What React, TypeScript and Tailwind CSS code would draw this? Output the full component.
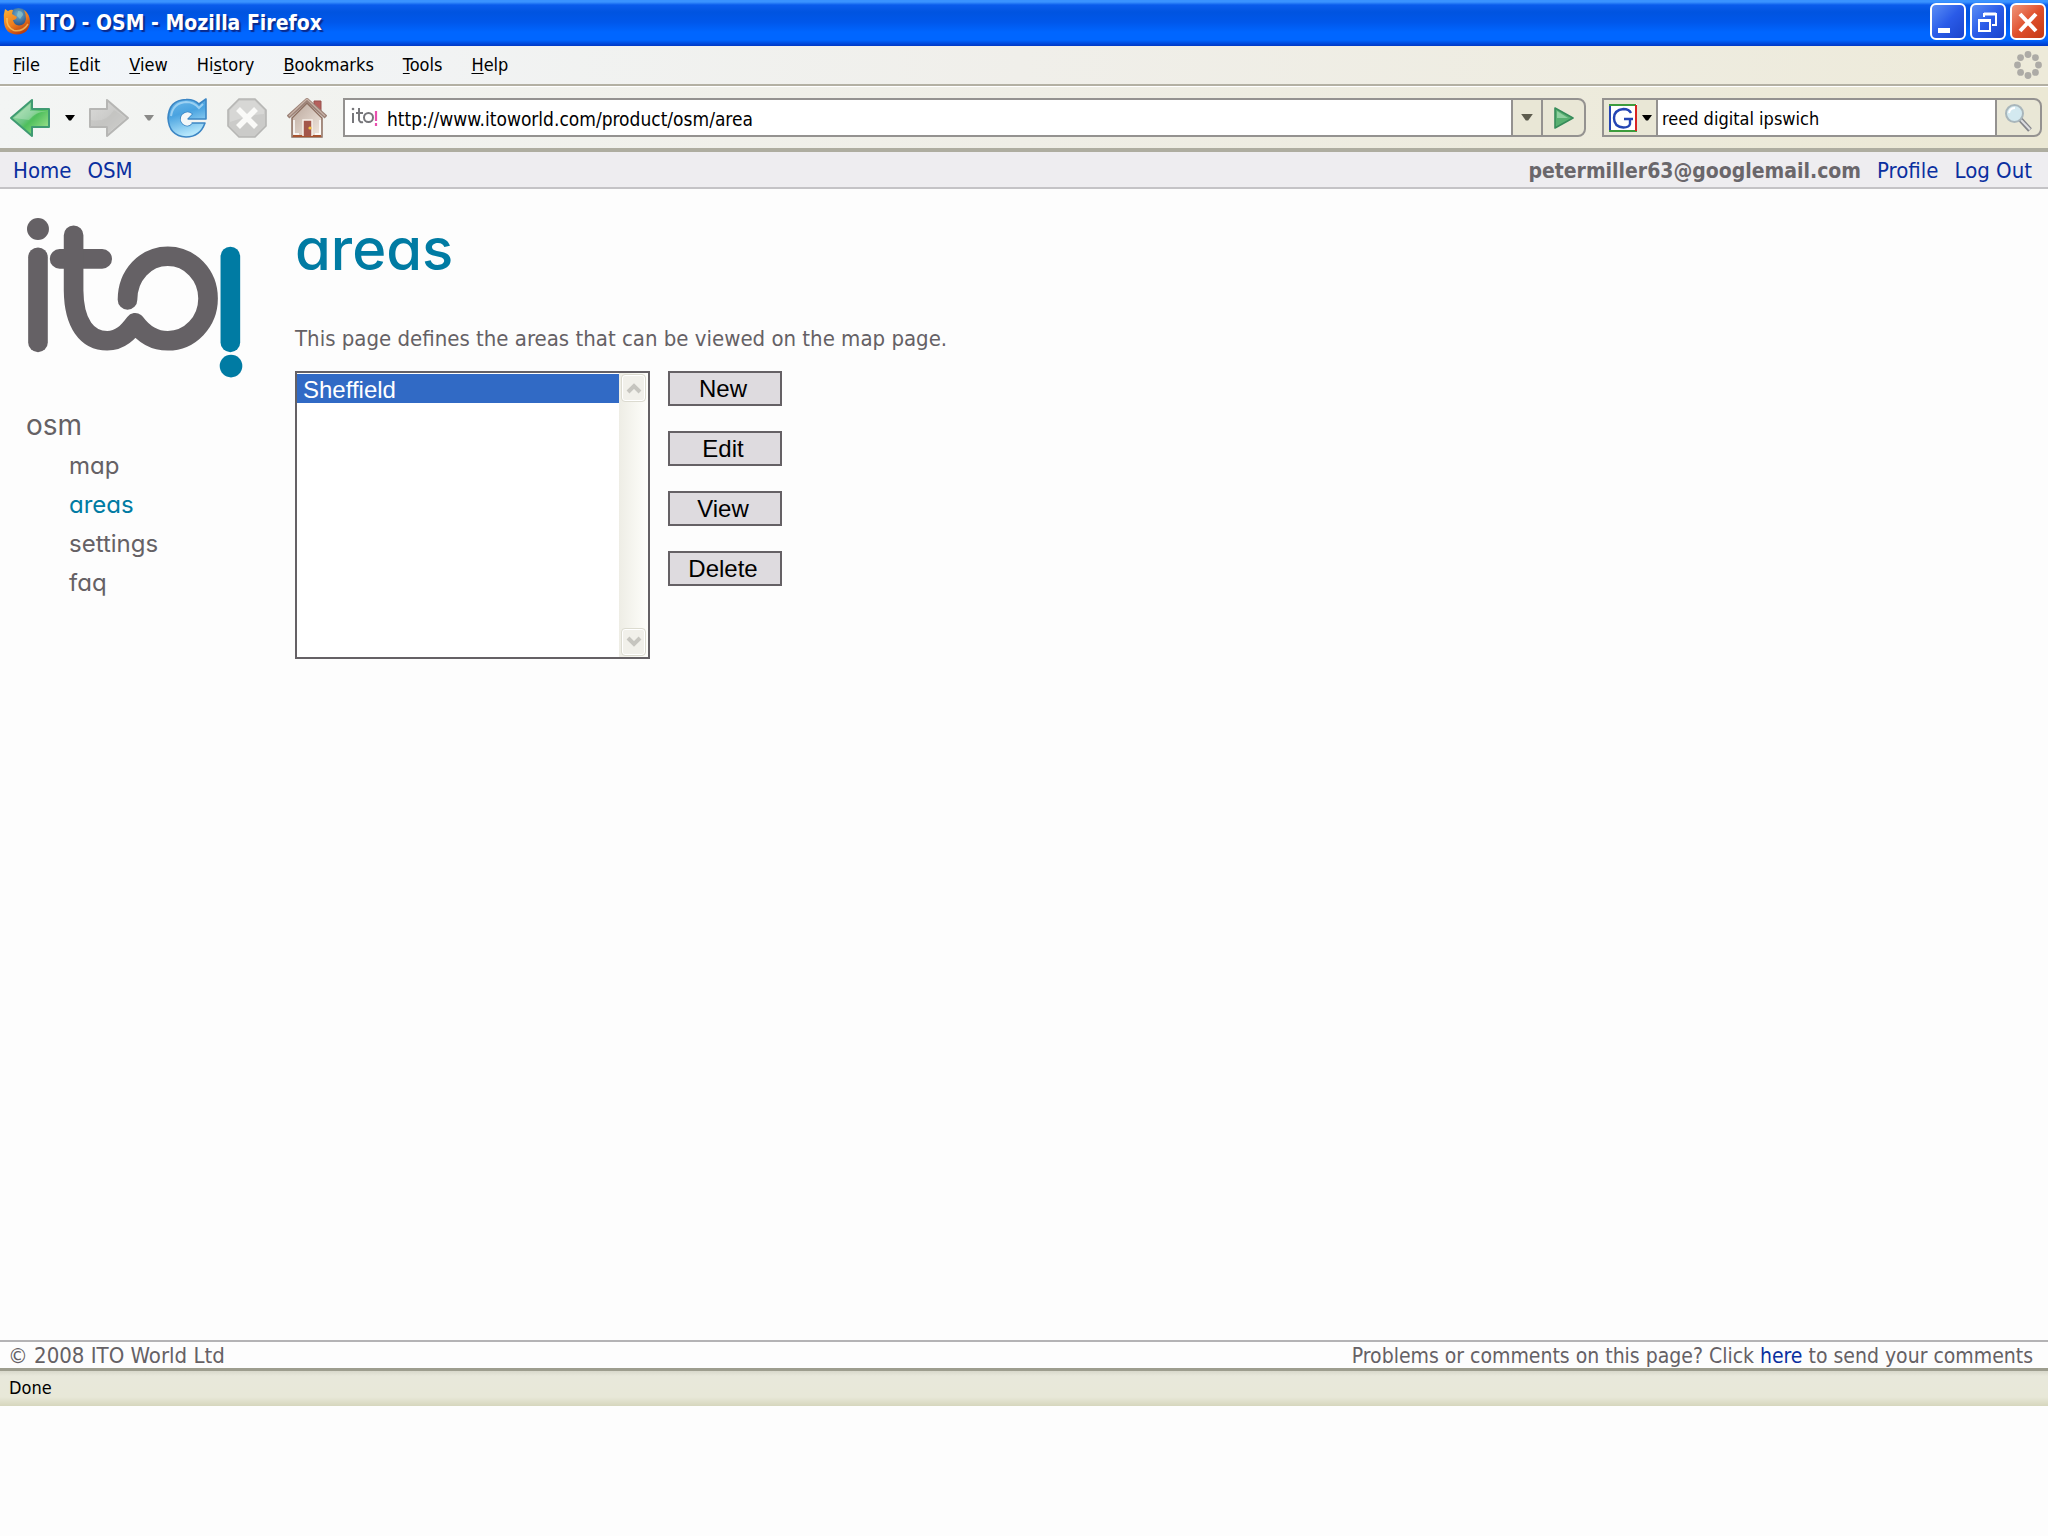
import React from 'react';

const uiFont = "font-['DejaVu_Sans_Condensed','Noto_Sans',sans-serif]";
const brandFont = "font-[Inter,sans-serif] [font-feature-settings:'cv11','ss03']";

const menus = [
  ['', 'F', 'ile'],
  ['', 'E', 'dit'],
  ['', 'V', 'iew'],
  ['Hi', 's', 'tory'],
  ['', 'B', 'ookmarks'],
  ['', 'T', 'ools'],
  ['', 'H', 'elp'],
];

function FirefoxIcon() {
  return (
    <svg className="size-7 shrink-0" viewBox="0 0 28 28" aria-hidden="true">
      <defs>
        <linearGradient id="fox" x1="0" y1="0" x2="0.6" y2="1">
          <stop offset="0" stopColor="#f7b23a" />
          <stop offset="0.6" stopColor="#ef7d1d" />
          <stop offset="1" stopColor="#b83d10" />
        </linearGradient>
        <radialGradient id="globe" cx="0.5" cy="0.3" r="0.7">
          <stop offset="0" stopColor="#6fb0d0" />
          <stop offset="1" stopColor="#16366f" />
        </radialGradient>
      </defs>
      <circle cx="15.500" cy="11.500" r="10.500" fill="url(#globe)" />
      <path d="M15 4 Q20 4 20 8 L17 12 L14 9Z" fill="#8fc4c8" opacity="0.7" />
      <path d="M2 2 L5 4 Q8 2 10 3 L9 7 L14 10 Q13 13 10 13 Q11 18 16 18.500 Q22 18 23 12 Q23 7 21 3 Q27 7 27 15 Q26 27 14 27.500 Q2 27 1 15 Q0 8 2 2Z" fill="url(#fox)" />
      <path d="M4 11 Q3 20 11 23.500 Q20 25 25 17" stroke="#fbd36a" strokeWidth="1.500" fill="none" opacity="0.7" />
    </svg>
  );
}

function BackIcon() {
  return (
    <svg className="h-10 w-[42px]" viewBox="0 0 42 40" aria-hidden="true">
      <defs>
        <linearGradient id="back" x1="0" y1="0" x2="1" y2="1">
          <stop offset="0" stopColor="#b5e6b8" />
          <stop offset="0.45" stopColor="#6cc583" />
          <stop offset="0.55" stopColor="#4fbf5c" />
          <stop offset="1" stopColor="#b6ec9c" />
        </linearGradient>
      </defs>
      <path d="M2 20 L23 2 V11 H40 V29 H23 V38 Z" fill="url(#back)" stroke="#3f9b72" strokeWidth="2" strokeLinejoin="round" />
      <path d="M5 20 L21 6 V13 H38 Q26 14 20 22Z" fill="#fff" opacity="0.25" />
    </svg>
  );
}

function ForwardIcon() {
  return (
    <svg className="h-10 w-[42px]" viewBox="0 0 42 40" aria-hidden="true">
      <defs>
        <linearGradient id="fwd" x1="0" y1="0" x2="1" y2="1">
          <stop offset="0" stopColor="#dcdcda" />
          <stop offset="0.5" stopColor="#cacac8" />
          <stop offset="1" stopColor="#dededc" />
        </linearGradient>
      </defs>
      <path d="M40 20 L19 2 V11 H2 V29 H19 V38 Z" fill="url(#fwd)" stroke="#b6b6b4" strokeWidth="2" strokeLinejoin="round" />
      <path d="M3 28 V22 Q18 25 26 12 L38 20 L20 35 V28Z" fill="#bcbcba" opacity="0.4" />
    </svg>
  );
}

function ReloadIcon() {
  return (
    <svg className="size-10" viewBox="0 0 40 40" aria-hidden="true">
      <defs>
        <linearGradient id="rel" x1="0" y1="0" x2="0.3" y2="1">
          <stop offset="0" stopColor="#6db9ea" />
          <stop offset="0.45" stopColor="#4aa3e0" />
          <stop offset="1" stopColor="#b4e6fb" />
        </linearGradient>
      </defs>
      <path d="M39 1 V21 H20 L25 16 Q20 12 15 17 Q12 22 16 26 Q21 30 25 25 H38 Q33 39 19 39 Q2 38 1 20 Q2 2 19 1.500 Q27 1 32 6 Z" fill="url(#rel)" stroke="#3c86c4" strokeWidth="1.600" strokeLinejoin="round" />
      <path d="M4 18 Q6 5 19 4 Q27 4 32 10 L36 6" stroke="#b8e0f8" strokeWidth="2" fill="none" opacity="0.7" />
      <path d="M25 16 Q20 12 15 17 Q12 22 16 26 Q21 30 25 25 L20 21 Z" fill="#f4f7f8" />
    </svg>
  );
}

function StopIcon() {
  return (
    <svg className="size-10" viewBox="0 0 40 40" aria-hidden="true">
      <path d="M12 1 H28 L39 12 V28 L28 39 H12 L1 28 V12Z" fill="#cbcbc9" stroke="#b6b6b4" strokeWidth="1.600" />
      <path d="M12 3 H28 L37 12 V16 Q20 17 3 24 V12Z" fill="#dadad8" opacity="0.8" />
      <path d="M11 11 L29 29 M29 11 L11 29" stroke="#fafaf8" strokeWidth="5.500" />
    </svg>
  );
}

function HomeIcon() {
  return (
    <svg className="size-10" viewBox="0 0 40 40" aria-hidden="true">
      <defs>
        <linearGradient id="wall" x1="0" y1="0" x2="1" y2="1">
          <stop offset="0" stopColor="#b9a69b" />
          <stop offset="1" stopColor="#f4ebe2" />
        </linearGradient>
      </defs>
      <path d="M27 3 H34 V14 L27 9Z" fill="#b5605c" stroke="#96504c" />
      <path d="M5 20 L20 5 L35 20 V39 H5Z" fill="url(#wall)" stroke="#8d6f60" strokeWidth="1.500" />
      <path d="M6 38 H34" stroke="#a8532f" strokeWidth="2" />
      <path d="M7 22 V36 H12 M33 22 V36 H28" stroke="#fff" strokeWidth="1.500" fill="none" />
      <path d="M1 19 L20 2 L39 19" stroke="#9c8277" strokeWidth="4" fill="none" />
      <path d="M2 18 L20 1 L38 18" stroke="#c9b4a8" strokeWidth="1.200" fill="none" />
      <path d="M16 38 V22 H25 V38" fill="#a3564a" stroke="#f8f1ea" strokeWidth="1.500" />
      <circle cx="23" cy="30" r="1.600" fill="#f5c542" />
    </svg>
  );
}

function Caret({ className }: { className: string }) {
  return (
    <svg className={className} viewBox="0 0 10 6" aria-hidden="true">
      <path d="M0 0 H10 L6 5.500 H4Z" fill="currentColor" />
    </svg>
  );
}

function Throbber() {
  const dots = [0, 1, 2, 3, 4, 5, 6, 7].map((i) => (i * Math.PI) / 4);
  return (
    <svg className="size-7" viewBox="-14 -14 28 28" aria-hidden="true">
      {dots.map((a) => (
        <circle key={a} cx={Math.cos(a) * 10.5} cy={Math.sin(a) * 10.5} r="3.400" fill="#adaba6" />
      ))}
    </svg>
  );
}

function ItoLogo() {
  return (
    <svg className="h-[162px] w-[218px]" viewBox="78 80 655 485" role="img" aria-label="ito!">
      <g fill="none" stroke="#656165" strokeWidth="59" strokeLinecap="round" strokeLinejoin="round">
        <path d="M114 200 V456" />
        <path d="M179 205 H307" />
        <path d="M221 134 V300 C222 400 262 451 322 451 C362 451 386 424 406 397 C432 432 466 451 504 451 C571 451 625 394 625 324 C625 254 571 197 504 197 C437 197 383 254 383 328" />
      </g>
      <circle cx="114" cy="115" r="33" fill="#656165" />
      <path d="M692 198 V456" stroke="#007ba3" strokeWidth="59" strokeLinecap="round" />
      <circle cx="694" cy="527" r="34" fill="#007ba3" />
    </svg>
  );
}

const winButton =
  'flex h-[37px] w-9 items-center justify-center rounded-md border-2 border-white';

function TitleBar() {
  return (
    <header className="flex h-[46px] items-center justify-between bg-[linear-gradient(180deg,#3a93ff_0px,#3a93ff_2px,#0a5cec_5px,#0054e0_12px,#0057ea_22px,#0066ff_32px,#0066ff_40px,#0046d8_44px,#0038c4_46px)] pr-[2px] pl-[3px]">
      <div className="flex items-center gap-2 pb-[5px]">
        <FirefoxIcon />
        <h1 className="pt-[5px] font-['DejaVu_Sans_Condensed','Noto_Sans',sans-serif] text-[21px] leading-7 font-bold text-white [text-shadow:2px_2px_1px_#0a2a8c]">
          ITO - OSM - Mozilla Firefox
        </h1>
      </div>
      <div className="flex gap-1 pb-[3px]">
        <button aria-label="Minimize" className={`${winButton} bg-linear-to-br from-[#5c8df5] via-[#2a5be8] to-[#1b44cc]`}>
          <svg className="size-8" viewBox="0 0 32 32" aria-hidden="true">
            <path d="M6 22 H18 V27 H6Z" fill="#fff" />
          </svg>
        </button>
        <button aria-label="Restore" className={`${winButton} bg-linear-to-br from-[#5c8df5] via-[#2a5be8] to-[#1b44cc]`}>
          <svg className="size-8" viewBox="0 0 32 32" aria-hidden="true">
            <path d="M12 11 V8 H24 V19 H20" fill="none" stroke="#fff" strokeWidth="2" />
            <path d="M12 8 H24" stroke="#fff" strokeWidth="3" />
            <path d="M7 15 H18 V25 H7Z" fill="none" stroke="#fff" strokeWidth="2" />
            <path d="M6 14.500 H19" stroke="#fff" strokeWidth="3" />
          </svg>
        </button>
        <button aria-label="Close" className={`${winButton} bg-linear-to-br from-[#ee9478] via-[#e0502c] to-[#c43a14]`}>
          <svg className="size-8" viewBox="0 0 32 32" aria-hidden="true">
            <path d="M8 8 L24 25 M24 8 L8 25" stroke="#fff" strokeWidth="4" />
          </svg>
        </button>
      </div>
    </header>
  );
}

function MenuBar() {
  return (
    <nav aria-label="Menu bar" className="flex h-10 items-center justify-between border-b-2 border-[#b3b0a3] bg-linear-to-r from-[#f2f6fa] via-[#f0efea] to-[#edead9] pr-[6px] pl-[13px]">
      <ul className={`flex gap-[29px] text-[18px] leading-6 text-black ${uiFont}`}>
        {menus.map(([pre, key, post]) => (
          <li key={key + post}>
            <button>
              {pre}
              <span className="underline underline-offset-2">{key}</span>
              {post}
            </button>
          </li>
        ))}
      </ul>
      <Throbber />
    </nav>
  );
}

function Toolbar() {
  return (
    <div className="flex h-[66px] items-center border-t border-b-4 border-t-white border-b-[#aeada0] bg-linear-to-r from-[#f3f5f4] via-[#efeee6] to-[#ebe8d4] pr-[6px] pl-[9px]">
      <div className="flex shrink-0 items-center">
        <button aria-label="Back"><BackIcon /></button>
        <button aria-label="Back history" className="flex w-[37px] justify-center text-black"><Caret className="h-[6px] w-[10px]" /></button>
        <button aria-label="Forward"><ForwardIcon /></button>
        <button aria-label="Forward history" className="flex w-[37px] justify-center text-[#8a8a88]"><Caret className="h-[6px] w-[10px]" /></button>
        <div className="flex gap-5">
          <button aria-label="Reload"><ReloadIcon /></button>
          <button aria-label="Stop"><StopIcon /></button>
          <button aria-label="Home page"><HomeIcon /></button>
        </div>
      </div>
      <div className="ml-4 flex h-[39px] grow items-stretch overflow-hidden rounded-r-lg border-2 border-[#949290] bg-[#e9e7d6]">
        <div className="flex grow items-center bg-white pl-[6px]">
          <svg className="h-7 w-7" viewBox="0 0 28 28" aria-hidden="true">
            <g fill="none" stroke="#77777b" strokeWidth="2">
              <path d="M2 9 V19 M8 4 V16 Q9 19 12 18 M5 9 H12" />
              <circle cx="17.500" cy="13.500" r="4.500" />
            </g>
            <circle cx="2" cy="5" r="1.300" fill="#77777b" />
            <path d="M25 7 V17 M25 19 V22" stroke="#e94fae" strokeWidth="2.200" />
          </svg>
          <input
            aria-label="Address"
            defaultValue="http://www.itoworld.com/product/osm/area"
            className={`ml-2 min-w-0 grow bg-transparent pt-[3px] text-[19px] leading-7 text-black outline-none ${uiFont}`}
          />
        </div>
        <button aria-label="Show addresses" className="flex w-[30px] items-center justify-center border-l-2 border-[#949290] text-[#5d5c4e]">
          <Caret className="h-[7px] w-3" />
        </button>
        <button aria-label="Go" className="flex w-[43px] items-center justify-center border-l-2 border-[#949290]">
          <svg className="h-6 w-5" viewBox="0 0 20 24" aria-hidden="true">
            <path d="M1 2 L19 12 L1 22Z" fill="#58b071" stroke="#378c5a" strokeWidth="1.600" strokeLinejoin="round" />
            <path d="M3 5 L14 12 L3 12Z" fill="#8fd0a0" />
          </svg>
        </button>
      </div>
      <div className="ml-4 flex h-[39px] w-[440px] shrink-0 items-stretch overflow-hidden rounded-r-lg border-2 border-[#949290] bg-[#e9e7d6]">
        <button aria-label="Search engine" className="flex w-[52px] items-center gap-[5px] pl-[5px]">
          <svg className="size-7" viewBox="0 0 28 28" aria-hidden="true">
            <rect width="28" height="28" fill="#fff" />
            <path d="M1 27 V1" stroke="#2746b4" strokeWidth="2" />
            <path d="M0 1 H27 M0 27 H28" stroke="#3d9c3d" strokeWidth="2" />
            <path d="M27 1 V27" stroke="#d92323" strokeWidth="2" />
            <path d="M22 9 Q20 5 14.500 5 Q5 6 5 14 Q5 23 14.500 23.500 Q20 23.500 21 20 V15 H15 M18 15 H24" fill="none" stroke="#2445b4" strokeWidth="2.400" />
          </svg>
          <Caret className="h-[6px] w-[10px] text-black" />
        </button>
        <input
          aria-label="Search"
          defaultValue="reed digital ipswich"
          className={`min-w-0 grow border-x-2 border-[#949290] bg-white pt-[3px] pl-1 text-[18px] leading-7 text-black outline-none ${uiFont}`}
        />
        <button aria-label="Search the web" className="flex w-[43px] items-center justify-center">
          <svg className="h-7 w-[29px]" viewBox="0 0 29 28" aria-hidden="true">
            <path d="M16 15 L26 26" stroke="#84858a" strokeWidth="5" />
            <path d="M17 16 L26 25.500" stroke="#dcdde0" strokeWidth="2" />
            <circle cx="10.500" cy="9.500" r="8.500" fill="#d3e9f0" stroke="#a9b6bb" strokeWidth="2" />
            <path d="M5 9 Q6 4 11 4" stroke="#fff" strokeWidth="2" fill="none" />
          </svg>
        </button>
      </div>
    </div>
  );
}

const link = 'text-[#0a2f9f]';

function AccountBar() {
  return (
    <div className={`flex h-[37px] items-center justify-between border-b-2 border-[#c4c3c6] bg-[#eeedf0] pt-[3px] pr-4 pl-[13px] text-[22px] leading-7 ${uiFont}`}>
      <nav aria-label="Site" className="flex gap-4">
        <a href="#home" className={link}>Home</a>
        <a href="#osm" className={link}>OSM</a>
      </nav>
      <div className="flex gap-4">
        <strong className="text-[21px] font-bold text-[#6a676b]">petermiller63@googlemail.com</strong>
        <a href="#profile" className={link}>Profile</a>
        <a href="#logout" className={link}>Log Out</a>
      </div>
    </div>
  );
}

function Sidebar() {
  return (
    <aside className={`w-[295px] shrink-0 pt-7 pl-[26px] text-[#656165] ${brandFont}`}>
      <ItoLogo />
      <nav aria-label="Section" className="mt-[26px]">
        <a href="#osm" className="block text-[28px] leading-[40px]">osm</a>
        <ul className="pl-[43px] pt-px text-[24px] leading-[39px]">
          <li><a href="#map">map</a></li>
          <li><a href="#areas" aria-current="page" className="text-[#007ba3]">areas</a></li>
          <li><a href="#settings">settings</a></li>
          <li><a href="#faq">faq</a></li>
        </ul>
      </nav>
    </aside>
  );
}

function ScrollButton({ label, d }: { label: string; d: string }) {
  return (
    <button aria-label={label} disabled className="flex h-7 items-center justify-center rounded-sm border border-[#dcdbd0] bg-[#f1f0ea] shadow-[inset_0_0_0_1px_#fff]">
      <svg className="h-3 w-4" viewBox="0 0 16 12" aria-hidden="true">
        <path d={d} fill="none" stroke="#c6c5bf" strokeWidth="4" />
      </svg>
    </button>
  );
}

function AreasPage() {
  return (
    <main className="grow">
      <h2 className={`pt-6 text-[58px] leading-[72px] font-medium text-[#007ba3] ${brandFont}`}>areas</h2>
      <p className={`mt-10 text-[22px] leading-7 text-[#656165] ${uiFont}`}>
        This page defines the areas that can be viewed on the map page.
      </p>
      <div className="mt-[18px] flex items-start gap-[18px] font-['Liberation_Sans',Arial,sans-serif] text-[24px]">
        <div className="flex h-[288px] w-[355px] border-2 border-[#656165] bg-white">
          <select
            aria-label="Areas"
            size={8}
            defaultValue="Sheffield"
            className="grow appearance-none overflow-hidden bg-white pt-px outline-none"
          >
            <option className="h-7 px-[6px] pt-[2px] pb-0 leading-[26px] [-webkit-text-fill-color:#fff] checked:bg-[linear-gradient(#316ac5,#316ac5)]">
              Sheffield
            </option>
          </select>
          <div className="flex w-[29px] flex-col justify-between bg-linear-to-r from-[#eeede5] to-[#fefefb] px-[2px] py-px">
            <ScrollButton label="Scroll up" d="M2 10 L8 4 L14 10" />
            <ScrollButton label="Scroll down" d="M2 2 L8 8 L14 2" />
          </div>
        </div>
        <div className="flex w-[114px] flex-col gap-[25px]">
          {['New', 'Edit', 'View', 'Delete'].map((name) => (
            <button key={name} className="h-[35px] border-2 border-[#656165] bg-[#dedbdf] pr-1 leading-7 text-black">
              {name}
            </button>
          ))}
        </div>
      </div>
    </main>
  );
}

export default function App() {
  return (
    <div className="flex min-h-screen flex-col bg-[#fdfdfd] pb-[130px]">
      <TitleBar />
      <MenuBar />
      <Toolbar />
      <AccountBar />
      <div className="flex grow">
        <Sidebar />
        <AreasPage />
      </div>
      <footer className={`flex h-7 items-center justify-between border-t-2 border-[#b4b3b5] pt-[2px] pr-[15px] pl-2 text-[21px] leading-6 text-[#656165] ${uiFont}`}>
        <p className="text-[22px]">© 2008 ITO World Ltd</p>
        <p>
          Problems or comments on this page? Click <a href="#contact" className={link}>here</a> to send your comments
        </p>
      </footer>
      <div role="status" className={`flex h-[38px] items-center border-t-3 border-[#9d9d8e] bg-[linear-gradient(180deg,#d8d8cb_0px,#e8e8db_5px,#e8e8d8_26px,#d6d6bd_35px)] pb-[2px] pl-[9px] text-[18px] leading-6 text-black ${uiFont}`}>
        Done
      </div>
    </div>
  );
}
